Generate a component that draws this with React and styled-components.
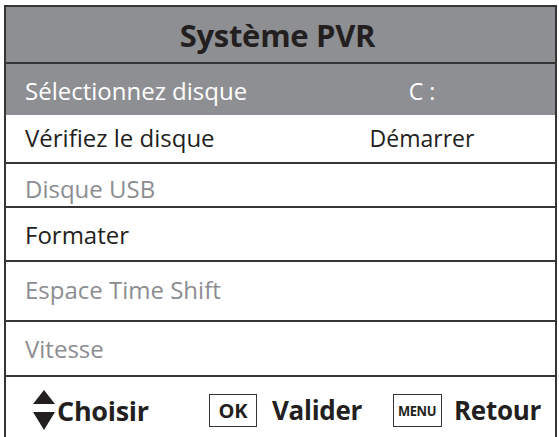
import React from "react";
import styled, { createGlobalStyle } from "styled-components";

const GlobalStyle = createGlobalStyle`
  html, body {
    margin: 0;
    padding: 0;
    background: #ffffff;
  }

  body {
    font-family: "Open Sans", "Noto Sans", sans-serif;
    color: #231f20;
  }
`;

const Panel = styled.div`
  box-sizing: border-box;
  width: 553px;
  height: 432px;
  margin: 5px 0 0 4px;

  display: flex;
  flex-direction: column;

  border: 2px solid #353535;
  border-bottom: none;
  background: #ffffff;
`;

const Header = styled.div`
  box-sizing: border-box;
  height: 57px;

  display: flex;
  align-items: center;
  justify-content: center;

  background: #8e8f93;
  border-bottom: 2px solid #353535;
`;

const Title = styled.h1`
  margin: 0 0 0 -6px;
  font-size: 31px;
  font-weight: 700;
  color: #231f20;
  letter-spacing: -0.3px;
`;

const Row = styled.div`
  box-sizing: border-box;
  height: ${(props) => props.$height}px;
  padding: ${(props) =>
    props.$nudge > 0
      ? `${props.$nudge * 2}px 63px 0 19px`
      : `0 63px ${-props.$nudge * 2}px 19px`};

  display: grid;
  grid-template-columns: 1fr 140px;
  align-items: center;

  font-size: 24px;
  background: ${(props) => (props.$selected ? "#8e8f93" : "#ffffff")};
  color: ${(props) =>
    props.$selected ? "#ffffff" : props.$disabled ? "#8c8d91" : "#231f20"};
  border-bottom: ${(props) => (props.$divider ? "2px solid #353535" : "none")};
`;

const Label = styled.span`
  white-space: nowrap;
`;

const Value = styled.span`
  text-align: center;
  white-space: nowrap;
  font-size: 23px;
`;

const Footer = styled.div`
  flex: 1;
  padding: 6px 0 0 27px;

  display: grid;
  grid-template-columns: 176px 184px auto;
  align-items: center;
`;

const Hint = styled.div`
  display: flex;
  align-items: center;
  gap: ${(props) => props.$gap}px;
`;

const HintText = styled.span`
  font-size: ${(props) => props.$size || 26}px;
  font-weight: 700;
  color: #231f20;
  letter-spacing: -0.3px;
`;

const Key = styled.span`
  box-sizing: border-box;
  width: ${(props) => props.$width}px;
  height: 33px;

  display: flex;
  align-items: center;
  justify-content: center;

  border: 1.5px solid #353535;
  background: #ffffff;
`;

const KeyText = styled.span`
  display: inline-block;
  font-size: ${(props) => props.$size}px;
  font-weight: 700;
  color: #231f20;
  letter-spacing: ${(props) => (props.$narrow ? "-0.5px" : "0")};
  transform: ${(props) => (props.$narrow ? "scaleX(0.86)" : "none")};
`;

const ArrowsIcon = () => (
  <svg width="22" height="42" viewBox="0 0 22 42" aria-hidden="true">
    <polygon points="0,15 11,1 22,15" fill="#231f20" />
    <polygon points="0,23 22,23 11,41" fill="#231f20" />
  </svg>
);

const rows = [
  { label: "Sélectionnez disque", value: "C :", height: 51, selected: true, nudge: 1 },
  { label: "Vérifiez le disque", value: "Démarrer", height: 49, divider: true, nudge: -1 },
  { label: "Disque USB", height: 44, disabled: true, divider: true, nudge: 3 },
  { label: "Formater", height: 54, divider: true, nudge: 0 },
  { label: "Espace Time Shift", height: 60, disabled: true, divider: true, nudge: -2 },
  { label: "Vitesse", height: 55, disabled: true, divider: true, nudge: 0 },
];

export default function App() {
  return (
    <>
      <GlobalStyle />
      <Panel>
        <Header>
          <Title>Système PVR</Title>
        </Header>

        {rows.map((row) => (
          <Row
            key={row.label}
            $height={row.height}
            $selected={row.selected}
            $disabled={row.disabled}
            $divider={row.divider}
            $nudge={row.nudge}
          >
            <Label>{row.label}</Label>
            <Value>{row.value}</Value>
          </Row>
        ))}

        <Footer>
          <Hint $gap={2}>
            <ArrowsIcon />
            <HintText $size={27}>Choisir</HintText>
          </Hint>
          <Hint $gap={15}>
            <Key $width={48}>
              <KeyText $size={20}>OK</KeyText>
            </Key>
            <HintText>Valider</HintText>
          </Hint>
          <Hint $gap={12}>
            <Key $width={49}>
              <KeyText $size={15} $narrow>
                MENU
              </KeyText>
            </Key>
            <HintText>Retour</HintText>
          </Hint>
        </Footer>
      </Panel>
    </>
  );
}
